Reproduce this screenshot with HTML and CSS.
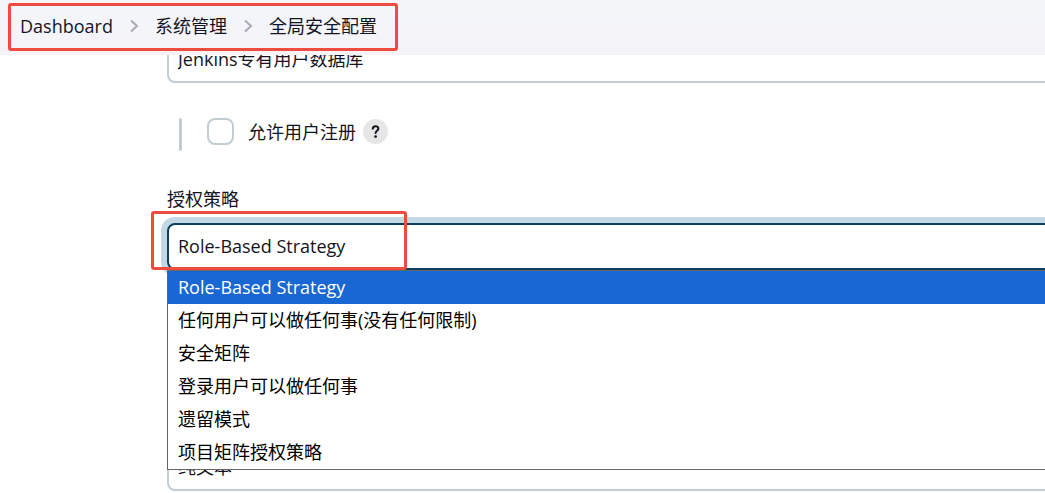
FILE: index.html
```html
<!DOCTYPE html>
<html lang="zh-CN">
<head>
<meta charset="utf-8">
<meta name="viewport" content="width=device-width, initial-scale=1">
<title>全局安全配置</title>
<link rel="stylesheet" href="styles.css">
</head>
<body>
<header class="topbar">
  <nav class="breadcrumbs">
    <a class="crumb" href="#">Dashboard</a>
    <svg class="chevron" viewBox="0 0 10 14" aria-hidden="true"><path d="M2 1.5l6 5.5-6 5.5"/></svg>
    <a class="crumb" href="#">系统管理</a>
    <svg class="chevron" viewBox="0 0 10 14" aria-hidden="true"><path d="M2 1.5l6 5.5-6 5.5"/></svg>
    <a class="crumb" href="#">全局安全配置</a>
  </nav>
  <div class="mark mark-nav"></div>
</header>
<main class="form">
  <select class="field" aria-label="安全域"><option>Jenkins专有用户数据库</option></select>
  <div class="nested">
    <label class="check"><input class="box" type="checkbox">允许用户注册</label>
    <button class="help" type="button"><svg viewBox="0 0 25 25" aria-hidden="true"><path d="M9.8 9.8c0-3.5 5.6-3.5 5.6-.2 0 2-2.8 2.2-2.8 4.4"/><circle cx="12.6" cy="17.6" r="1.4"/></svg></button>
  </div>
  <label class="label" for="strategy">授权策略</label>
  <div class="combo">
    <select class="field focused" id="strategy"><option>Role-Based Strategy</option></select>
    <ul class="menu" role="listbox">
      <li class="option active" role="option" aria-selected="true">Role-Based Strategy</li>
      <li class="option" role="option">任何用户可以做任何事(没有任何限制)</li>
      <li class="option" role="option">安全矩阵</li>
      <li class="option" role="option">登录用户可以做任何事</li>
      <li class="option" role="option">遗留模式</li>
      <li class="option" role="option">项目矩阵授权策略</li>
    </ul>
    <div class="mark mark-field"></div>
  </div>
  <select class="field markup"><option>纯文本</option></select>
</main>
</body>
</html>
```
FILE: styles.css
```css
* { box-sizing: border-box; }

body {
  margin: 0;
  background: #fff;
  color: #14141f;
  font: 18px/24px "Open Sans", "Noto Sans CJK SC", sans-serif;
  overflow: hidden;
}

.topbar {
  position: sticky;
  top: 0;
  z-index: 2;
  padding: 14px 20px 17px;
  background: linear-gradient(#f4f6fa, #f4f3f8);
}

.breadcrumbs { display: flex; align-items: center; gap: 16px; }
.crumb { color: inherit; text-decoration: none; }

.chevron {
  width: 10px;
  height: 14px;
  fill: none;
  stroke: #a9a9b8;
  stroke-width: 2;
}

.form {
  display: flex;
  flex-direction: column;
  margin-top: -19px;
  margin-right: -40px;
  padding-left: 167px;
}

.field {
  appearance: none;
  display: block;
  width: 100%;
  height: 47px;
  padding: 0 9px 2px;
  border: 2px solid #c3ccd1;
  border-radius: 8px;
  background: #fff;
  color: inherit;
  font: inherit;
}

.focused {
  border-color: #0b4060;
  box-shadow: 0 0 0 6px #c2d9e5;
  outline: none;
}

.nested {
  display: flex;
  align-items: flex-start;
  gap: 7px;
  height: 33px;
  margin: 35px 0 36px 12px;
  padding-left: 25px;
  position: relative;
}

.nested::before {
  content: "";
  position: absolute;
  left: 0;
  top: 0;
  bottom: 0;
  width: 3px;
  border-radius: 2px;
  background: #c3ccd1;
}

.check { display: flex; align-items: center; gap: 14px; padding-left: 3px; }

.box {
  appearance: none;
  width: 27px;
  height: 27px;
  margin: 0;
  border: 2px solid #c3ccd1;
  border-radius: 8px;
}

.help {
  width: 25px;
  height: 25px;
  margin-top: 1px;
  padding: 0;
  border: 0;
  border-radius: 50%;
  background: #e6e6e6;
}

.help svg { display: block; width: 25px; height: 25px; fill: #14141f; }
.help path { fill: none; stroke: #14141f; stroke-width: 2; stroke-linecap: round; }

.label { margin-bottom: 12px; }

.combo { position: relative; }

.menu {
  position: absolute;
  z-index: 1;
  top: 100%;
  left: 0;
  width: 100%;
  margin: 0;
  padding: 0;
  list-style: none;
  background: #fff;
  border: 1px solid #666;
}

.option { padding: 0 10px; line-height: 33px; color: #000; }
.active { background: #1967d2; color: #fff; }

.mark {
  position: absolute;
  z-index: 3;
  border: 3px solid #f04b40;
  border-radius: 3px;
  pointer-events: none;
}

.mark-nav { left: 8px; top: 3px; width: 390px; height: 48px; }
.mark-field { left: -16px; top: -12px; width: 256px; height: 59px; }

.markup { margin-top: 174px; }
```
